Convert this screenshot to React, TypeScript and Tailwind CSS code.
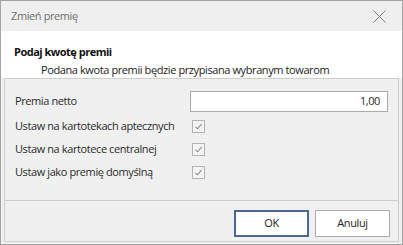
import React from "react";

function Check() {
  return (
    <div className="w-[13px] h-[13px] border border-[#b4b4b4] bg-[#f4f4f4] flex items-center justify-center">
      <svg width="11" height="11" viewBox="0 0 11 11">
        <path d="M2.5 5.8 L4.5 7.8 L8.5 3.2" fill="none" stroke="#8a8a8a" strokeWidth="1.1" />
      </svg>
    </div>
  );
}

export default function App() {
  const rows = [
    "Ustaw na kartotekach aptecznych",
    "Ustaw na kartotece centralnej",
    "Ustaw jako premię domyślną",
  ];
  return (
    <div
      className="w-[403px] h-[245px] border border-[#a3a3a3] bg-[#f0f0f0] flex flex-col text-[11px] tracking-[-0.4px] text-[#2b2b2b] whitespace-nowrap"
      style={{ fontFamily: '"Open Sans", "Noto Sans", sans-serif' }}
    >
      <div className="h-[30px] bg-[#efefef] flex items-center justify-between pl-[10px] pr-[16px]">
        <span className="text-[#6f6f6f] text-[11px]">Zmień premię</span>
        <svg width="13" height="13" viewBox="0 0 13 13">
          <path d="M0.5 0.5 L12.5 12.5 M12.5 0.5 L0.5 12.5" stroke="#7c7c7c" strokeWidth="1" fill="none" />
        </svg>
      </div>
      <div className="h-[47px] bg-white flex flex-col pl-[13px] pt-[12px]">
        <div className="font-bold text-[#111] text-[11px] tracking-[-0.5px] leading-[18px]">Podaj kwotę premii</div>
        <div className="pl-[27px] leading-[17px] text-[#222]">Podana kwota premii będzie przypisana wybranym towarom</div>
      </div>
      <div className="flex-1 px-[3px] pb-[2px] flex">
        <div className="flex-1 border border-[#cdcdcd] flex flex-col">
          <div className="h-[121px] pl-[10px] pr-[9px] pt-[12px] flex flex-col">
            <div className="flex items-center h-[21px]">
              <div className="w-[175px]">Premia netto</div>
              <div className="w-[198px] h-[21px] border border-[#ababab] bg-white flex items-center justify-end pr-[7px]">
                1,00
              </div>
            </div>
            <div className="mt-[3px] flex flex-col">
              {rows.map((r) => (
                <div key={r} className="flex items-center h-[23px]">
                  <div className="w-[177px]">{r}</div>
                  <Check />
                </div>
              ))}
            </div>
          </div>
          <div className="border-t border-[#cdcdcd] flex-1 flex justify-end items-start pt-[9px] pr-[8px] gap-[6px]">
            <button className="w-[75px] h-[27px] border-2 border-[#4a6891] bg-white text-[#222]">OK</button>
            <button className="w-[75px] h-[27px] border border-[#adadad] bg-white text-[#222]">Anuluj</button>
          </div>
        </div>
      </div>
    </div>
  );
}
